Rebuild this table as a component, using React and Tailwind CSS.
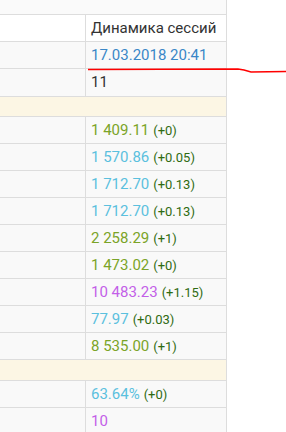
const GREEN = 'text-[#7ba428]'
const BLUE = 'text-[#5bc0de]'
const PURPLE = 'text-[#c35fe8]'

const rows1 = [
  { v: '1 409.11', d: '(+0)', c: GREEN },
  { v: '1 570.86', d: '(+0.05)', c: BLUE },
  { v: '1 712.70', d: '(+0.13)', c: BLUE },
  { v: '1 712.70', d: '(+0.13)', c: BLUE },
  { v: '2 258.29', d: '(+1)', c: GREEN },
  { v: '1 473.02', d: '(+0)', c: GREEN },
  { v: '10 483.23', d: '(+1.15)', c: PURPLE },
  { v: '77.97', d: '(+0.03)', c: BLUE },
  { v: '8 535.00', d: '(+1)', c: GREEN },
]

function Row({ children, h = 'h-[28px]', bg = 'bg-[#f9f9f9]' }) {
  return (
    <div className={`flex ${h} ${bg} border-b border-[#dddddd]`}>
      <div className="w-[86px] border-r border-[#dddddd]" />
      <div className="flex-1 flex items-center pl-[5px]">{children}</div>
    </div>
  )
}

function Value({ v, d, c }) {
  return (
    <span className="whitespace-nowrap">
      <span className={`text-[15px] ${c}`}>{v}</span>{' '}
      {d && <span className="text-[13px] text-[#2f6b12]">{d}</span>}
    </span>
  )
}

export default function App() {
  return (
    <div className="relative w-[286px] h-[432px] overflow-hidden bg-white" style={{ fontFamily: 'Roboto, "Noto Sans", sans-serif' }}>
      <div className="w-[227px] border-r border-[#dddddd]">
        <div className="h-[15px] bg-[#fafafa] border-b border-[#dddddd]" />
        <Row bg="bg-white" h="h-[27px]">
          <span className="text-[15px] text-[#333333]">Динамика сессий</span>
        </Row>
        <Row h="h-[27px]">
          <span className="text-[15px] text-[#3a87c7]">17.03.2018 20:41</span>
        </Row>
        <Row>
          <span className="text-[15px] text-[#333333]">11</span>
        </Row>
        <div className="h-[20px] bg-[#fcf6e4] border-b border-[#dddddd]" />
        {rows1.map((r, i) => (
          <Row key={i} h="h-[27px]">
            <Value {...r} />
          </Row>
        ))}
        <div className="h-[21px] bg-[#fcf6e4] border-b border-[#dddddd]" />
        <Row h="h-[27px]">
          <Value v="63.64%" d="(+0)" c={BLUE} />
        </Row>
        <Row h="h-[27px]">
          <Value v="10" c={PURPLE} />
        </Row>
      </div>
      <svg className="absolute left-0 top-0 pointer-events-none" width="286" height="432">
        <path d="M88 69.5 L238 69 L244 70 L251 72 L286 71.5" fill="none" stroke="#ff0000" strokeWidth="1.6" />
      </svg>
    </div>
  )
}
